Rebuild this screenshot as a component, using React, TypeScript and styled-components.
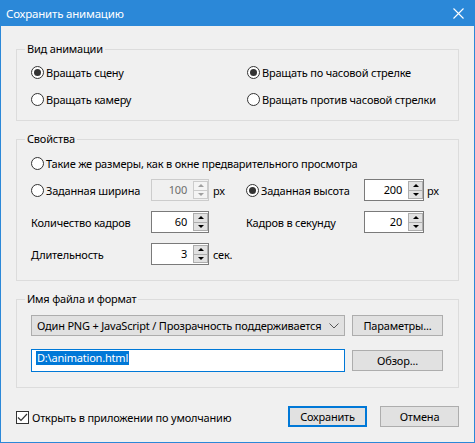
import React from 'react';
import styled, { createGlobalStyle } from 'styled-components';

const GlobalStyle = createGlobalStyle`
  html, body {
    margin: 0;
    padding: 0;
    background: #f0f0f0;
  }
  body {
    font-family: "Noto Sans", "Liberation Sans", sans-serif;
    font-size: 11px;
    letter-spacing: -0.2px;
    color: #000;
  }
`;

const Window = styled.div`
  width: 475px;
  height: 443px;
  box-sizing: border-box;
  border: 1px solid #2b88d8;
  border-top: none;
  background: #f0f0f0;
  display: flex;
  flex-direction: column;
`;

const TitleBar = styled.div`
  height: 26px;
  flex: none;
  margin: 0 -1px;
  background: #2b88d8;
  color: #fff;
  display: flex;
  align-items: center;
  justify-content: space-between;
  padding: 0 11px 0 6px;
`;

const Title = styled.span`
  font-size: 11.5px;
`;

const Body = styled.div`
  flex: 1;
  padding: 23px 15px 15px 15px;
  display: flex;
  flex-direction: column;
`;

const Group = styled.div<{ $pad: string }>`
  position: relative;
  border: 1px solid #dcdcdc;
  padding: ${p => p.$pad};
  margin-bottom: 18px;
`;

const Legend = styled.span`
  position: absolute;
  top: -9px;
  left: 8px;
  padding: 0 2px;
  line-height: 16px;
  background: #f0f0f0;
`;

const TwoCols = styled.div`
  display: grid;
  grid-template-columns: 216px 1fr;
  grid-auto-rows: 20px;
  row-gap: 7px;
`;

const RadioLabel = styled.label<{ $mb?: number }>`
  display: flex;
  align-items: center;
  height: 20px;
  white-space: nowrap;
  margin-bottom: ${p => p.$mb ?? 0}px;
`;

const Circle = styled.span<{ $on?: boolean }>`
  width: 13px;
  height: 13px;
  box-sizing: border-box;
  border: 1px solid #333;
  border-radius: 50%;
  background: #fff;
  margin-right: 2px;
  display: flex;
  align-items: center;
  justify-content: center;
  flex: none;

  &::after {
    content: '';
    width: 7px;
    height: 7px;
    border-radius: 50%;
    background: ${p => (p.$on ? '#333' : 'transparent')};
  }
`;

const SpinGrid = styled.div`
  display: grid;
  grid-template-columns: 120px 58px 37px 118px 60px auto;
  grid-auto-rows: 22px;
  row-gap: 10px;
  align-items: center;
`;

const Unit = styled.span<{ $pl: number }>`
  padding-left: ${p => p.$pl}px;
`;

const SpinBox = styled.div<{ $disabled?: boolean }>`
  height: 22px;
  box-sizing: border-box;
  border: 1px solid ${p => (p.$disabled ? '#cccccc' : '#7a7a7a')};
  background: ${p => (p.$disabled ? '#f0f0f0' : '#fff')};
  color: ${p => (p.$disabled ? '#6d6d6d' : '#000')};
  display: flex;
`;

const SpinValue = styled.span`
  flex: 1;
  text-align: right;
  padding-right: 6px;
  line-height: 20px;
`;

const SpinButtons = styled.div`
  width: 15px;
  display: flex;
  flex-direction: column;
  padding: 1px 0;
`;

const SpinButton = styled.div<{ $down?: boolean; $disabled?: boolean }>`
  flex: 1;
  background: ${p => (p.$disabled ? '#f4f4f4' : '#e1e1e1')};
  border: 1px solid ${p => (p.$disabled ? '#cccccc' : '#adadad')};
  margin-top: ${p => (p.$down ? '-1px' : '0')};
  display: flex;
  align-items: center;
  justify-content: center;

  &::after {
    content: '';
    border-left: 3px solid transparent;
    border-right: 3px solid transparent;
    ${p => (p.$down ? 'border-top' : 'border-bottom')}: 3px solid ${p => (p.$disabled ? '#a0a0a0' : '#000')};
  }
`;

const FileGrid = styled.div`
  display: grid;
  grid-template-columns: 314px 91px;
  column-gap: 7px;
  row-gap: 13px;
  grid-template-rows: 21px 23px;
  align-items: center;
`;

const Combo = styled.div`
  height: 21px;
  box-sizing: border-box;
  border: 1px solid #adadad;
  background: #e1e1e1;
  display: flex;
  align-items: center;
  justify-content: space-between;
  padding: 0 5px 0 5px;
  white-space: nowrap;
`;

const TextField = styled.div`
  height: 23px;
  box-sizing: border-box;
  border: 1px solid #0078d7;
  background: #fff;
  padding: 1px 0 0 4px;
  display: flex;
  align-items: flex-start;
`;

const Selected = styled.span`
  background: #0078d7;
  color: #fff;
  line-height: 14px;
  padding: 0 1px 0 1px;
`;

const Button = styled.div<{ $primary?: boolean; $w: number }>`
  width: ${p => p.$w}px;
  height: 21px;
  box-sizing: border-box;
  border: ${p => (p.$primary ? '2px solid #0078d7' : '1px solid #adadad')};
  background: #e1e1e1;
  display: flex;
  align-items: center;
  justify-content: center;
  white-space: nowrap;
`;

const Footer = styled.div`
  display: flex;
  align-items: center;
  justify-content: space-between;
  height: 21px;
`;

const CheckLabel = styled.label`
  display: flex;
  align-items: center;
  gap: 3px;
  padding-top: 2px;
`;

const CheckBox = styled.span`
  width: 13px;
  height: 13px;
  box-sizing: border-box;
  border: 1px solid #333;
  background: #fff;
  display: flex;
  align-items: center;
  justify-content: center;
`;

const Buttons = styled.div`
  display: flex;
  gap: 13px;
`;

function Radio({ checked, label, mb }: { checked?: boolean; label: string; mb?: number }) {
  return (
    <RadioLabel $mb={mb}>
      <Circle $on={checked} />
      {label}
    </RadioLabel>
  );
}

function Spin({ value, disabled }: { value: number; disabled?: boolean }) {
  return (
    <SpinBox $disabled={disabled}>
      <SpinValue>{value}</SpinValue>
      <SpinButtons>
        <SpinButton $disabled={disabled} />
        <SpinButton $down $disabled={disabled} />
      </SpinButtons>
    </SpinBox>
  );
}

export default function App() {
  return (
    <>
      <GlobalStyle />
      <Window>
        <TitleBar>
          <Title>Сохранить анимацию</Title>
          <svg width="11" height="11" viewBox="0 0 11 11">
            <path d="M0.5 0.5 L10.5 10.5 M10.5 0.5 L0.5 10.5" stroke="#fff" strokeWidth="1.1" />
          </svg>
        </TitleBar>
        <Body>
          <Group $pad="12px 14px 11px 14px">
            <Legend>Вид анимации</Legend>
            <TwoCols>
              <Radio checked label="Вращать сцену" />
              <Radio checked label="Вращать по часовой стрелке" />
              <Radio label="Вращать камеру" />
              <Radio label="Вращать против часовой стрелки" />
            </TwoCols>
          </Group>

          <Group $pad="13px 14px 15px 14px">
            <Legend>Свойства</Legend>
            <Radio mb={6} label="Такие же размеры, как в окне предварительного просмотра" />
            <SpinGrid>
              <Radio label="Заданная ширина" />
              <Spin value={100} disabled />
              <Unit $pl={4}>px</Unit>
              <Radio checked label="Заданная высота" />
              <Spin value={200} />
              <Unit $pl={3}>px</Unit>

              <span>Количество кадров</span>
              <Spin value={60} />
              <span />
              <span>Кадров в секунду</span>
              <Spin value={20} />
              <span />

              <span>Длительность</span>
              <Spin value={3} />
              <Unit $pl={4}>сек.</Unit>
            </SpinGrid>
          </Group>

          <Group $pad="15px 14px 15px 14px">
            <Legend>Имя файла и формат</Legend>
            <FileGrid>
              <Combo>
                <span>Один PNG + JavaScript / Прозрачность поддерживается</span>
                <svg width="10" height="6" viewBox="0 0 10 6">
                  <path d="M0.5 0.5 L5 5 L9.5 0.5" fill="none" stroke="#555" strokeWidth="1" />
                </svg>
              </Combo>
              <Button $w={91}>Параметры...</Button>
              <TextField>
                <Selected>D:\animation.html</Selected>
              </TextField>
              <Button $w={91}>Обзор...</Button>
            </FileGrid>
          </Group>

          <Footer>
            <CheckLabel>
              <CheckBox>
                <svg width="11" height="9" viewBox="0 0 11 9">
                  <path d="M1 4.5 L4 7.5 L10 1" fill="none" stroke="#333" strokeWidth="1.2" />
                </svg>
              </CheckBox>
              Открыть в приложении по умолчанию
            </CheckLabel>
            <Buttons>
              <Button $primary $w={79}>Сохранить</Button>
              <Button $w={79}>Отмена</Button>
            </Buttons>
          </Footer>
        </Body>
      </Window>
    </>
  );
}
